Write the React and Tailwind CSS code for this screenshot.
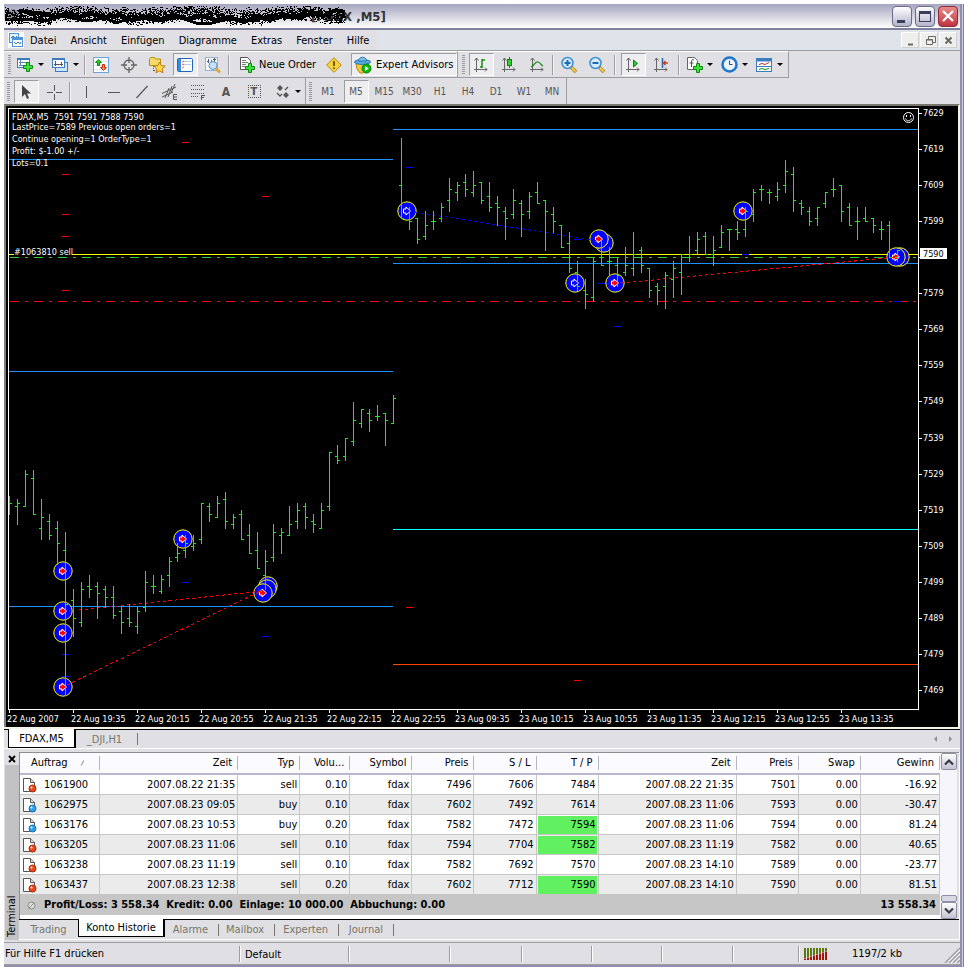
import clsx from 'clsx';

// [high, low, open, close] in chart units, one bar every 8 units
const bars = [
  [496, 515, null, 503], [499, 525, 506, 503], [470, 507, 506, 474], [470, 514, 478, 514],
  [499, 540, 528, 517], [514, 540, 521, 535], [521, 565, 528, 543], [532, 696, 550, 604],
  [589, 637, 600, 618], [582, 627, 622, 589], [575, 598, 586, 589], [582, 619, 586, 593],
  [586, 608, 589, 597], [586, 619, 597, 615], [607, 634, 611, 622], [604, 627, 618, 622],
  [607, 634, 626, 611], [571, 612, 607, 582], [575, 594, 586, 586], [575, 594, 591, 579],
  [557, 587, 575, 561], [543, 562, 557, 553], [535, 558, 550, 543], [535, 551, 546, 543],
  [503, 544, 539, 503], [503, 522, 506, 514], [496, 518, 517, 503], [492, 529, 499, 521],
  [514, 529, 524, 517], [510, 540, 514, 539], [524, 554, 535, 553], [532, 569, 550, 568],
  [550, 590, 575, 561], [524, 562, 557, 532], [528, 554, 535, 532], [506, 536, 535, 524],
  [503, 529, 521, 510], [503, 529, 506, 517], [514, 533, 521, 524], [503, 529, 528, 510],
  [452, 511, 506, 452], [445, 464, 456, 460], [438, 461, 456, 438], [402, 446, 441, 420],
  [409, 428, 423, 409], [409, 432, 413, 420], [405, 421, 416, 416], [413, 446, 413, 420],
  [395, 424, 423, 398], [138, 219, 185, 218], [207, 230, null, 221], [218, 244, 218, 239],
  [211, 240, 236, 225], [211, 230, 221, 221], [203, 222, 218, 207], [178, 212, 200, 189],
  [182, 201, 192, 185], [174, 197, 182, 189], [171, 197, 192, 185], [182, 204, 182, 200],
  [182, 212, 196, 207], [196, 226, 203, 207], [207, 240, 211, 218], [189, 219, 214, 200],
  [200, 237, 203, 214], [192, 219, 211, 196], [182, 204, 192, 203], [200, 251, 200, 211],
  [207, 233, 214, 221], [225, 248, 225, 247], [232, 273, 243, 268], [261, 291, 272, 286],
  [279, 309, 290, 294], [257, 302, 297, 261], [240, 266, 257, 265], [247, 276, 261, 261],
  [257, 287, 265, 275], [247, 276, 272, 265], [232, 276, 268, 254], [247, 273, 250, 265],
  [268, 298, 268, 290], [283, 305, 286, 290], [272, 309, 286, 275], [261, 298, 279, 268],
  [254, 295, 272, 254], [236, 262, 257, 254], [232, 254, 250, 239], [232, 254, 236, 254],
  [236, 266, 254, 250], [225, 248, 247, 232], [229, 251, 229, 229], [221, 240, 229, 232],
  [207, 237, 229, 211], [189, 222, 214, 192], [185, 201, 189, 189], [189, 204, 192, 192],
  [182, 201, 196, 189], [160, 193, 185, 171], [167, 212, 174, 200], [200, 215, 203, 207],
  [207, 226, 211, 221], [207, 226, 218, 207], [192, 208, 203, 192], [178, 197, 189, 189],
  [185, 222, 185, 211], [203, 226, 207, 225], [207, 240, 221, 221], [207, 222, 218, 221],
  [218, 233, 218, 225], [221, 240, 229, 229], [221, 258, 225, 257], [250, 262, 257, 250],
];

// [x1, x2, y, color]
const levels = [
  [9, 393, 159, '#1e90ff'],
  [9, 393, 371, '#1e90ff'],
  [9, 393, 606, '#1e90ff'],
  [393, 918, 129, '#1e90ff'],
  [393, 918, 263, '#1e90ff'],
  [393, 918, 529, '#00ffff'],
  [393, 918, 664, '#ff4500'],
  [9, 918, 254, '#ffff00'],
];

const redStops = [
  [62, 174], [62, 214], [62, 236], [62, 290], [182, 142], [262, 196], [406, 607], [574, 680],
];

const blueStops = [
  [62, 654], [62, 676], [182, 582], [262, 636], [406, 167], [574, 239], [598, 283], [614, 326],
  [742, 254], [894, 301],
];

const markers = [
  [63, 571, 'red'], [63, 611, 'red'], [63, 633, 'red'], [63, 687, 'red'], [183, 539, 'red'],
  [268, 586, 'red'], [267, 589, 'red'], [263, 593, 'red'], [407, 211, 'blue'],
  [575, 283, 'blue'], [615, 283, 'red'], [604, 243, 'blue'], [599, 239, 'red'],
  [743, 211, 'red'], [900, 257, 'red'], [896, 257, 'red'],
];

const trades = [
  [79, 610, 263, 591, '#ff0000'],
  [67, 685, 263, 590, '#ff0000'],
  [621, 283, 897, 257, '#ff0000'],
  [415, 212, 599, 241, '#0000ff'],
];

const times = [
  '22 Aug 2007', '22 Aug 19:35', '22 Aug 20:15', '22 Aug 20:55', '22 Aug 21:35',
  '22 Aug 22:15', '22 Aug 22:55', '23 Aug 09:35', '23 Aug 10:15', '23 Aug 10:55',
  '23 Aug 11:35', '23 Aug 12:15', '23 Aug 12:55', '23 Aug 13:35',
];

const prices = Array.from({ length: 17 }, (_, i) => 7629 - i * 10);

const menus = ['Datei', 'Ansicht', 'Einfügen', 'Diagramme', 'Extras', 'Fenster', 'Hilfe'];

const periods = ['M1', 'M5', 'M15', 'M30', 'H1', 'H4', 'D1', 'W1', 'MN'];

const columns = [
  { label: 'Auftrag', width: 'w-[80px]' },
  { label: 'Zeit', width: 'w-[138px]' },
  { label: 'Typ', width: 'w-[62px]' },
  { label: 'Volu...', width: 'w-[50px]' },
  { label: 'Symbol', width: 'w-[62px]' },
  { label: 'Preis', width: 'w-[62px]' },
  { label: 'S / L', width: 'w-[62px]' },
  { label: 'T / P', width: 'w-[62px]' },
  { label: 'Zeit', width: 'w-[138px]' },
  { label: 'Preis', width: 'w-[62px]' },
  { label: 'Swap', width: 'w-[62px]' },
  { label: 'Gewinn', width: 'w-[79px]' },
];

const orders = [
  ['1061900', '2007.08.22 21:35', 'sell', '0.10', 'fdax', '7496', '7606', '7484', '2007.08.22 21:35', '7501', '0.00', '-16.92'],
  ['1062975', '2007.08.23 09:05', 'buy', '0.10', 'fdax', '7602', '7492', '7614', '2007.08.23 11:06', '7593', '0.00', '-30.47'],
  ['1063176', '2007.08.23 10:53', 'buy', '0.20', 'fdax', '7582', '7472', '7594', '2007.08.23 11:06', '7594', '0.00', '81.24'],
  ['1063205', '2007.08.23 11:06', 'sell', '0.10', 'fdax', '7594', '7704', '7582', '2007.08.23 11:19', '7582', '0.00', '40.65'],
  ['1063238', '2007.08.23 11:19', 'sell', '0.10', 'fdax', '7582', '7692', '7570', '2007.08.23 14:10', '7589', '0.00', '-23.77'],
  ['1063437', '2007.08.23 12:38', 'sell', '0.20', 'fdax', '7602', '7712', '7590', '2007.08.23 14:10', '7590', '0.00', '81.51'],
];

const hitTarget = ['1063176', '1063205', '1063437'];

// Spray of small dots around a wavy centre line, used to black out the title
function sprayPath() {
  let seed = 7;
  const rnd = () => {
    seed = (seed * 16807) % 2147483647;
    return seed / 2147483647;
  };
  let d = '';
  for (let i = 0; i < 3600; i++) {
    const x = Math.floor(1 + rnd() * 340);
    const mid = 11 + Math.sin(x / 17) * 2 + Math.sin(x / 5);
    const y = Math.floor(mid + (rnd() + rnd() - 1) * 9);
    if (y < 2 || y > 22) continue;
    const w = rnd() > 0.8 ? 2 : 1;
    d += `M${x} ${y}h${w}v1h-${w}z`;
  }
  return d;
}

const spray = sprayPath();

function Icon({ children, w = 16, h = 16 }) {
  return (
    <svg width={w} height={h} viewBox={`0 0 ${w} ${h}`} fill="none" className="shrink-0" aria-hidden="true">
      {children}
    </svg>
  );
}

function Plus({ x, y }) {
  return (
    <path
      d={`M${x + 3.5} ${y + 0.5}h3v3h3v3h-3v3h-3v-3h-3v-3h3z`}
      fill="#3fe03f"
      stroke="#0a8a0a"
    />
  );
}

function NewChartIcon() {
  return (
    <Icon w={18} h={18}>
      <rect x="1.5" y="2.5" width="12" height="9" fill="#fff" stroke="#3b7cc0" />
      <path d="M1.5 3h12" stroke="#3b7cc0" strokeWidth="2" />
      <path d="M3 6.5h9M4.5 4v6M3 9.5h5" stroke="#5b86b0" />
      <Plus x={7} y={6} />
    </Icon>
  );
}

function ProfilesIcon() {
  return (
    <Icon w={18} h={18}>
      <rect x="4.5" y="6.5" width="12" height="9" fill="#cfe3f7" stroke="#3b7cc0" />
      <rect x="1.5" y="2.5" width="12" height="9" fill="#fff" stroke="#3b7cc0" />
      <path d="M1.5 3h12" stroke="#3b7cc0" strokeWidth="2" />
      <path d="M3 8.5h9M4.5 5v5M10.5 6v4" stroke="#555" />
    </Icon>
  );
}

function MarketWatchIcon() {
  return (
    <Icon>
      <rect x=".5" y=".5" width="15" height="15" fill="#fff" stroke="#6aa6de" />
      <path d="M1 4.5h14M1 8.5h14M1 12.5h14M8.5 1v14" stroke="#d7e6f5" />
      <path d="M5.5 2.5l3 3h-2v3h-2v-3h-2z" fill="#2fcf2f" stroke="#118811" />
      <path d="M10.5 13.5l-3-3h2v-3h2v3h2z" fill="#ff8a4a" stroke="#c03010" />
    </Icon>
  );
}

function TargetIcon() {
  return (
    <Icon>
      <circle cx="8" cy="8" r="5" stroke="#666" strokeWidth="1.3" />
      <path d="M8 0v6M8 10v6M0 8h6M10 8h6" stroke="#666" strokeWidth="1.3" />
    </Icon>
  );
}

function FavoritesIcon() {
  return (
    <Icon w={18} h={18}>
      <path d="M1.5 9.5v-7l1-1h4l1 1.5h5v6.5z" fill="#f5dc6a" stroke="#b8920a" />
      <path d="M5.5 10v5M6 14.5h3" stroke="#555" strokeDasharray="1 1" />
      <path d="M11.5 6l1.7 3.6 4 .5-3 2.7.8 4-3.5-2-3.5 2 .8-4-3-2.7 4-.5z" fill="#ffd84a" stroke="#c07a10" />
    </Icon>
  );
}

function NavigatorIcon() {
  return (
    <Icon>
      <rect x=".5" y="1.5" width="15" height="13" rx="1" fill="#fff" stroke="#1f66b8" />
      <rect x="1" y="2" width="3" height="12" fill="#3d8be0" />
      <path d="M6 4.5h8M6 7.5h8" stroke="#b8cbe0" />
      <path d="M5.5 4.5h1M5.5 7.5h1M5.5 10.5h1" stroke="#e02020" strokeWidth="1.5" />
    </Icon>
  );
}

function TesterIcon() {
  return (
    <Icon w={18} h={18}>
      <rect x="1.5" y="1.5" width="12" height="13" fill="#f4f8fc" stroke="#9ab4cf" />
      <path d="M4.5 3v4M7.5 4v3M10.5 2v5M3 5.5h2M9 3.5h3" stroke="#4b5b70" />
      <circle cx="9" cy="9.5" r="4" fill="#c6e2f8" stroke="#5a8ebf" />
      <path d="M12 12.5l4 4" stroke="#d8a830" strokeWidth="2.5" />
    </Icon>
  );
}

function NewOrderIcon() {
  return (
    <Icon w={16} h={18}>
      <path d="M1.5 1.5h7l3 3v9h-10z" fill="#fff" stroke="#555" />
      <path d="M3 4.5h4M3 6.5h6M3 8.5h4M3 10.5h3" stroke="#777" />
      <Plus x={6} y={7} />
    </Icon>
  );
}

function WarningIcon() {
  return (
    <Icon>
      <path d="M8 .7L15.3 8 8 15.3.7 8z" fill="#f8d23a" stroke="#b98a08" />
      <path d="M8 4v5M8 10.5v1.5" stroke="#4a3600" strokeWidth="1.5" />
    </Icon>
  );
}

function ExpertIcon() {
  return (
    <Icon w={18} h={18}>
      <path d="M2 8l3-1h7l2 2-1 6-4 2H6l-3-4z" fill="#f3c83c" stroke="#b8860b" />
      <ellipse cx="8.5" cy="6" rx="8" ry="2.5" fill="#5aa8dc" stroke="#2a78b0" />
      <path d="M4.5 5c0-5 8-5 8 0z" fill="#7cc0ec" stroke="#2a78b0" />
      <circle cx="12.5" cy="12.5" r="4.5" fill="#12b812" stroke="#078007" />
      <path d="M11.2 10v5l3.5-2.5z" fill="#fff" />
    </Icon>
  );
}

function Axes() {
  return (
    <path
      d="M3.5 1v14M1 12.5h13M1.5 3.5l2-2.5 2 2.5M12 10.5l2 2-2 2"
      stroke="#666"
    />
  );
}

function BarChartIcon() {
  return (
    <Icon>
      <Axes />
      <path d="M9 2v9M9 3h3M7 10h2" stroke="#149014" strokeWidth="1.5" />
    </Icon>
  );
}

function CandleIcon() {
  return (
    <Icon>
      <Axes />
      <path d="M8.5 0v11" stroke="#0d800d" />
      <rect x="6.5" y="2.5" width="4" height="6" fill="#2fd02f" stroke="#0d800d" />
    </Icon>
  );
}

function LineChartIcon() {
  return (
    <Icon>
      <Axes />
      <path d="M2 10c3-1 4-6 7-5s3 3 5 4" stroke="#149014" strokeWidth="1.3" />
    </Icon>
  );
}

function ZoomIcon({ plus }) {
  return (
    <Icon w={18} h={18}>
      <path d="M11 11l5 5" stroke="#b98a18" strokeWidth="3.5" />
      <path d="M11.5 11.5l4 4" stroke="#ffe070" strokeWidth="1.5" />
      <circle cx="7.5" cy="7" r="5.5" fill="#d4ecfc" stroke="#3f8fd0" strokeWidth="1.5" />
      <path d={plus ? 'M4.5 7h6M7.5 4v6' : 'M4.5 7h6'} stroke="#2468b0" strokeWidth="2" />
    </Icon>
  );
}

function AutoScrollIcon() {
  return (
    <Icon>
      <Axes />
      <path d="M8.5 3v7l4-3.5z" fill="#30d030" stroke="#0d800d" />
    </Icon>
  );
}

function ShiftIcon() {
  return (
    <Icon>
      <Axes />
      <path d="M9.5 1v10" stroke="#2468b0" strokeWidth="1.5" />
      <path d="M15 6h-4M12.5 4l-2 2 2 2" stroke="#d04010" strokeWidth="1.5" />
    </Icon>
  );
}

function IndicatorsIcon() {
  return (
    <Icon w={17} h={18}>
      <path d="M1.5 1.5h7l3 3v9h-10z" fill="#fff" stroke="#666" />
      <path d="M8 4c-2-1-2.5 0-2.5 2v5M3.5 7h4" stroke="#555" />
      <Plus x={7} y={7} />
    </Icon>
  );
}

function ClockIcon() {
  return (
    <Icon w={17} h={17}>
      <circle cx="8.5" cy="8.5" r="7" fill="#eaf4fe" stroke="#1f74cc" strokeWidth="2.5" />
      <path d="M8.5 4.500v4h3" stroke="#445" />
    </Icon>
  );
}

function TemplateIcon() {
  return (
    <Icon w={17} h={16}>
      <rect x=".5" y="1.5" width="15" height="13" fill="#fff" stroke="#3b7cc0" />
      <path d="M1 3h14" stroke="#3b7cc0" strokeWidth="3" />
      <path d="M1 9.5h14" stroke="#3b7cc0" />
      <path d="M3 7.5l3-1 3 1 4-2" stroke="#b03020" />
      <path d="M3 12.5l3-1 3 1 4-1" stroke="#149014" />
    </Icon>
  );
}

function CursorIcon() {
  return (
    <Icon>
      <path d="M4 1v12l3-3 2 5 2-1-2-4.500h4z" fill="#444" />
    </Icon>
  );
}

const lineTools = [
  ['Vertikale Linie', <path key="v" d="M8.5 2v12" stroke="#555" />],
  ['Horizontale Linie', <path key="h" d="M2 8.5h12" stroke="#555" />],
  ['Trendlinie', <path key="t" d="M2.5 14l11-12" stroke="#555" strokeWidth="1.2" />],
  [
    'Kanal',
    <g key="c">
      <path d="M0 9.5L14 3M0 13l11-5M3 14l4-10M6 13l4-11M9 9l4-9" stroke="#555" />
      <path d="M15 10.5h-3.5v5H15M11.5 13H15" stroke="#555" />
    </g>,
  ],
  [
    'Fibonacci',
    <g key="f">
      <path d="M1 1.5h14M1 5.5h14M1 9.5h14M1 12.5h8" stroke="#555" strokeDasharray="1 1" />
      <path d="M15 11.5h-3.5V16M11.5 13.5H14" stroke="#555" />
    </g>,
  ],
];

function ArrowsIcon() {
  return (
    <Icon>
      <path d="M5 1l3 3-3 3-3-3zM11 8l3 3-3 3-3-3z" fill="#555" />
      <path d="M10 6l3-3M2 9l3 3 2-2" stroke="#555" strokeWidth="1.3" />
    </Icon>
  );
}

function ToolButton({ label, pressed, children }) {
  return (
    <button type="button" aria-label={label} className="flex w-7 justify-center text-[#555]">
      <span
        className={clsx(
          'flex h-[23px] w-[25px] items-center justify-center',
          pressed && 'border border-[#9d9da1] border-r-white border-b-white bg-[#eeeef1]'
        )}
      >
        {children}
      </span>
    </button>
  );
}

function SplitButton({ label, width = 'w-[35px]', children }) {
  return (
    <button type="button" aria-label={label} className={clsx('flex items-center gap-1 pl-[3px]', width)}>
      {children}
      <span className="border-x-[3px] border-t-[3px] border-x-transparent border-t-black" />
    </button>
  );
}

function Separator({ margin = 'mx-px' }) {
  return <span className={clsx('h-5 w-[2px] border-l border-[#9d9da1] border-r border-r-[#f4f4f6]', margin)} />;
}

function Grip() {
  return (
    <span className="flex w-2 justify-center">
      <span className="h-5 w-[3px] bg-[repeating-linear-gradient(#9a9a9e_0_1px,#e0dfe3_1px_2px)]" />
    </span>
  );
}

function TitleBar() {
  return (
    <header className="flex h-6 items-center justify-end gap-[3px] bg-linear-to-b from-[#a5a5c0] via-[#d2d2de] to-white pr-[2px]">
      <div className="relative mr-auto h-6 pl-[307px]">
        <h1 className="pt-px text-[13px] leading-6 font-bold text-[#333]">[FDAX ,M5]</h1>
        <svg width="345" height="24" viewBox="0 0 345 24" className="absolute top-0 left-0" shapeRendering="crispEdges" aria-hidden="true">
          <circle cx="9" cy="11" r="6" fill="#8a95a5" />
          <path d="M16 7l24 3 12 3 10-4 14 4 12-3 12 3 16-2 12 5 16-4 14 3 10-4 14 4 16-3 14 4 12-3 16 5 14-6 12 4 16-5 14 3 12-5 12 3 12-6 8 2" fill="none" stroke="#000" strokeWidth="4" />
          <path d="M6 16l20-1 14 2 20-5 22 5 20-3 10 5 6-2 20-3 16 3 20-4 18 6 12 1 20-5 24 2 20-6 18 3 16-6" fill="none" stroke="#000" strokeWidth="3" />
          <path d={spray} fill="#000" />
        </svg>
      </div>
      <button type="button" aria-label="Minimieren" className="flex h-[21px] w-5 items-end rounded-sm border border-[#6b6b8c] bg-linear-to-b from-white to-[#b4b4cc] pb-[3px] pl-1">
        <span className="h-[3px] w-2 bg-[#3c3c5c]" />
      </button>
      <button type="button" aria-label="Maximieren" className="flex h-[21px] w-5 items-center justify-center rounded-sm border border-[#6b6b8c] bg-linear-to-b from-white to-[#b4b4cc]">
        <span className="h-[11px] w-3 border border-t-[3px] border-[#3c3c5c]" />
      </button>
      <button type="button" aria-label="Schließen" className="flex h-[21px] w-5 items-center justify-center rounded-sm border border-[#8c2b3c] bg-linear-to-b from-[#e88a8a] to-[#c03040]">
        <Icon w={14} h={14}>
          <path d="M2 2l10 10M12 2L2 12" stroke="#fff" strokeWidth="2.200" />
        </Icon>
      </button>
    </header>
  );
}

function MenuBar() {
  return (
    <nav className="flex h-[22px] items-center border-t-2 border-[#7f7f9e] bg-[#dfe3ea]">
      <div className="flex h-full items-center gap-[6px] bg-[#e0dfe3] pr-2 pl-1">
        <Icon>
          <rect width="16" height="16" fill="#fff" />
          <rect x="1.5" y="1.5" width="9" height="9" fill="#e4f0fb" stroke="#4f94d8" />
          <path d="M3 6l2-2 2 2 2-2" stroke="#3b7cc0" />
          <rect x="4.5" y="5.5" width="10" height="9" fill="#fff" stroke="#4f94d8" />
          <path d="M5 7h9" stroke="#4f94d8" strokeWidth="2" />
          <path d="M6 10l2 2 2-2 2 2 1-2" stroke="#3b7cc0" />
        </Icon>
        <div className="flex gap-[14px] pt-[2px]">
          {menus.map((item) => (
            <button key={item} type="button">{item}</button>
          ))}
        </div>
      </div>
      <div className="ml-auto flex gap-px pr-[3px]">
        {['M5 11.5h5', 'M6.5 6V3.5h7v6H11M4.5 6.5h6v5h-6zM4 7h7', 'M4.5 4.5l6 6M10.5 4.5l-6 6'].map((d, i) => (
          <button key={d} type="button" aria-label={['Minimieren', 'Wiederherstellen', 'Schließen'][i]} className="border border-white border-r-[#d0d0d0] border-b-[#d0d0d0] bg-[#efefee] px-px">
            <Icon w={14} h={14}>
              <path d={d} stroke="#6a695e" strokeWidth={i === 1 ? 1 : 2} />
            </Icon>
          </button>
        ))}
      </div>
    </nav>
  );
}

function Toolbars() {
  return (
    <div className="border-t border-[#9d9da1]">
      <div className="flex">
        <div className="flex h-[27px] items-center border-r border-b border-[#9d9da1] border-t border-t-white pl-px">
          <Grip />
          <SplitButton label="Neues Chart"><NewChartIcon /></SplitButton>
          <SplitButton label="Profile"><ProfilesIcon /></SplitButton>
          <Separator />
          <ToolButton label="Marktübersicht"><MarketWatchIcon /></ToolButton>
          <ToolButton label="Datenfenster"><TargetIcon /></ToolButton>
          <ToolButton label="Navigator"><FavoritesIcon /></ToolButton>
          <ToolButton label="Terminal" pressed><NavigatorIcon /></ToolButton>
          <ToolButton label="Strategietester"><TesterIcon /></ToolButton>
          <Separator />
          <button type="button" className="flex w-[89px] items-center gap-1 pt-px pl-2 whitespace-nowrap">
            <NewOrderIcon />
            Neue Order
          </button>
          <ToolButton label="MetaEditor"><WarningIcon /></ToolButton>
          <button type="button" className="ml-[3px] flex h-[23px] w-[106px] items-center gap-1 border border-[#9d9da1] border-r-white border-b-white bg-[#eeeef1] pt-px pl-[2px] whitespace-nowrap">
            <ExpertIcon />
            Expert Advisors
          </button>
        </div>
        <div className="flex h-[27px] items-center border-r border-b border-[#9d9da1] border-t border-t-white pl-px">
          <Grip />
          <ToolButton label="Balkenchart" pressed><BarChartIcon /></ToolButton>
          <ToolButton label="Kerzenchart"><CandleIcon /></ToolButton>
          <ToolButton label="Linienchart"><LineChartIcon /></ToolButton>
          <Separator />
          <ToolButton label="Vergrößern"><ZoomIcon plus /></ToolButton>
          <ToolButton label="Verkleinern"><ZoomIcon /></ToolButton>
          <Separator margin="mx-[3px]" />
          <ToolButton label="Automatischer Bildlauf" pressed><AutoScrollIcon /></ToolButton>
          <ToolButton label="Chart verschieben"><ShiftIcon /></ToolButton>
          <Separator margin="mx-[3px]" />
          <SplitButton label="Indikatoren"><IndicatorsIcon /></SplitButton>
          <SplitButton label="Perioden"><ClockIcon /></SplitButton>
          <SplitButton label="Vorlagen"><TemplateIcon /></SplitButton>
        </div>
      </div>
      <div className="flex">
        <div className="flex h-[26px] items-center border-r border-[#9d9da1] pt-px">
          <Grip />
          <ToolButton label="Cursor" pressed><CursorIcon /></ToolButton>
          <ToolButton label="Fadenkreuz">
            <Icon><path d="M8.5 1v6M8.5 10v6M1 8.5h6M10 8.5h6" stroke="#555" /></Icon>
          </ToolButton>
          <Separator />
          {lineTools.map(([label, shape]) => (
            <ToolButton key={label} label={label}><Icon>{shape}</Icon></ToolButton>
          ))}
          <ToolButton label="Text"><span className="text-[12px] font-bold">A</span></ToolButton>
          <ToolButton label="Textmarke">
            <span className="h-[13px] w-[13px] border border-dotted border-[#555] text-center text-[11px] leading-[12px] font-bold">T</span>
          </ToolButton>
          <span className="w-1" />
          <SplitButton label="Pfeile" width="w-[33px]"><ArrowsIcon /></SplitButton>
        </div>
        <div className="flex h-[26px] items-center border-r border-[#9d9da1] pt-px text-[10px]">
          <Grip />
          {periods.map((p) => (
            <ToolButton key={p} label={p} pressed={p === 'M5'}>{p}</ToolButton>
          ))}
        </div>
      </div>
    </div>
  );
}

function Marker({ x, y, color }) {
  return (
    <g transform={`translate(${x} ${y})`} shapeRendering="auto">
      <circle r="9.200" fill="#0000ff" stroke="#ffff00" />
      <path
        d="M-3.500 -2h2.500v-2l4.500 4-4.500 4v-2h-2.500z"
        fill={color === 'red' ? '#ff0000' : '#0000ff'}
        stroke="#fff"
      />
    </g>
  );
}

function Chart() {
  return (
    <svg viewBox="6 106 952 621" className="block h-auto w-full bg-black text-[9px]" shapeRendering="crispEdges" role="img" aria-label="FDAX,M5">
      <path d="M8.5 709.5V108.5H918.5V709.5z" fill="none" stroke="#fff" />
      {levels.map(([x1, x2, y, color]) => (
        <path key={`${x1}-${y}`} d={`M${x1} ${y}.5H${x2}`} stroke={color} />
      ))}
      <path d="M10 257.5H918" stroke="#32cd32" strokeDasharray="9 6 3 6" />
      <path d="M10 301.5H918" stroke="#ff0000" strokeDasharray="9 6 3 6" />
      {redStops.map(([x, y]) => (
        <path key={`${x}-${y}`} d={`M${x} ${y}.5h7`} stroke="#ff0000" />
      ))}
      {blueStops.map(([x, y]) => (
        <path key={`${x}-${y}`} d={`M${x} ${y}.5h7`} stroke="#0000ff" />
      ))}
      {markers.map(([x, y, color]) => (
        <Marker key={`${x}-${y}`} x={x} y={y} color={color} />
      ))}
      {trades.map(([x1, y1, x2, y2, color]) => (
        <path key={`${x1}-${y1}`} d={`M${x1} ${y1}L${x2} ${y2}`} stroke={color} strokeDasharray="3 3" />
      ))}
      {bars.map(([high, low, open, close], i) => {
        const x = 9 + i * 8;
        return (
          <path
            key={x}
            d={`M${x}.5 ${high}V${low}M${x} ${close}.5h3${open ? `M${x - 2} ${open}.5h3` : ''}`}
            stroke="#00ff00"
          />
        );
      })}

      <g fill="#fff">
        <text x="12" y="120" xmlSpace="preserve">FDAX,M5  7591 7591 7588 7590</text>
        <text x="12" y="130">LastPrice=7589 Previous open orders=1</text>
        <text x="12" y="142">Continue opening=1 OrderType=1</text>
        <text x="12" y="154">Profit: $-1.00 +/-</text>
        <text x="12" y="166">Lots=0.1</text>
        <rect x="14" y="247" width="58" height="9" fill="#000" />
        <text x="14" y="255">#1063810 sell</text>
        {prices.map((price, i) => {
          const y = 113 + Math.round(i * 36.06);
          return (
            <g key={price}>
              <path d={`M918 ${y}.5h4`} stroke="#fff" />
              {price !== 7589 && <text x="923" y={y + 3}>{price}</text>}
            </g>
          );
        })}
        {times.map((time, i) => (
          <g key={time}>
            <path d={`M${9 + i * 64}.5 710v3`} stroke="#fff" />
            <text x={7 + i * 64} y="722">{time}</text>
          </g>
        ))}
        <rect x="920" y="248" width="27" height="11" />
      </g>
      <text x="923" y="257" fill="#000">7590</text>
      <g fill="none" stroke="#fff" shapeRendering="auto">
        <circle cx="908.5" cy="117.5" r="5" />
        <path d="M906.5 115v2M910.5 115v2M905.5 118.5c1 3 5 3 6 0" />
      </g>
    </svg>
  );
}

function ChartTabs() {
  return (
    <div className="flex h-[22px] items-start border-t-2 border-b border-t-[#f5f4e6] border-b-white bg-[#e0dfe3]">
      <div className="flex h-[19px] flex-1 border-t border-black pl-1 leading-[17px]">
        <button type="button" className="-mt-px h-[19px] w-[68px] border border-t-0 border-r-2 border-black bg-white">FDAX,M5</button>
        <button type="button" className="w-[53px] pl-1 text-[#77766a]">_DJI,H1</button>
        <span className="ml-2 mt-[3px] h-3 w-px bg-[#77766a]" />
        <div className="ml-auto flex items-center gap-3 pr-2">
          <span className="border-y-[3px] border-r-[3px] border-y-transparent border-r-[#8d8d92]" />
          <span className="border-y-[3px] border-l-[3px] border-y-transparent border-l-[#8d8d92]" />
        </div>
      </div>
    </div>
  );
}

function OrderIcon({ type }) {
  return (
    <Icon>
      <path d="M1.5 1.5h7l4 4v9h-11z" fill="#fff" stroke="#555" />
      <path d="M8.5 1.5v4h4" fill="#ddd" stroke="#555" />
      <circle cx="10.5" cy="11.5" r="3.5" fill={type === 'sell' ? '#e8481c' : '#2f9fe8'} stroke={type === 'sell' ? '#a82c08' : '#1870b0'} />
      <circle cx="9.5" cy="10.5" r="1" fill="#fff" />
    </Icon>
  );
}

function OrderTable() {
  return (
    <table className="w-full table-fixed border-separate border-spacing-0 text-right leading-4">
      <thead>
        <tr>
          {columns.map(({ label, width }, i) => (
            <th key={i} scope="col" className={clsx('h-[22px] border-b-2 border-[#b9b9cb] bg-[#fafaff] p-0 font-normal', width)}>
              <span className={clsx('flex h-[14px] items-center border-r border-[#b5b5bd] pr-[5px] leading-[14px]', i === 0 ? 'gap-3 pl-[11px]' : 'justify-end')}>
                {label}
                {i === 0 && (
                  <Icon w={8} h={8}>
                    <path d="M1 7L4 1" stroke="#8d8d92" />
                    <path d="M4 1l3 6H1" stroke="#fff" />
                  </Icon>
                )}
              </span>
            </th>
          ))}
        </tr>
      </thead>
      <tbody>
        {orders.map((order) => (
          <tr key={order[0]} className="odd:bg-white even:bg-[#ebebeb]">
            {order.map((value, i) => (
              <td key={i} className="h-5 border-r border-b border-[#c6c6c6] p-0">
                {i === 0 ? (
                  <span className="flex items-center gap-[6px] pl-[2px]">
                    <OrderIcon type={order[2]} />
                    {value}
                  </span>
                ) : (
                  <span className={clsx('block', i === 7 && hitTarget.includes(order[0]) ? 'mx-px bg-[#60f060] py-px pr-px' : 'pr-[2px]')}>{value}</span>
                )}
              </td>
            ))}
          </tr>
        ))}
      </tbody>
      <tfoot>
        <tr className="bg-[#c6c6c6] font-bold">
          <td colSpan={10} className="h-5 p-0 text-left">
            <span className="flex items-center gap-2 pl-[7px] whitespace-pre">
              <Icon w={9} h={9}>
                <circle cx="4.5" cy="4.5" r="3.5" fill="#ddd" stroke="#8a8a8a" />
                <path d="M2 7l5-5" stroke="#8a8a8a" />
              </Icon>
              {'Profit/Loss: 3 558.34  Kredit: 0.00  Einlage: 10 000.00  Abbuchung: 0.00'}
            </span>
          </td>
          <td colSpan={2} className="p-0 pr-1">13 558.34</td>
        </tr>
      </tfoot>
    </table>
  );
}

function ScrollButton({ label, d }) {
  return (
    <button type="button" aria-label={label} className="flex h-[17px] w-4 items-center justify-center rounded-xs border border-[#8f8fa5] bg-linear-to-b from-white to-[#c3c3d3]">
      <Icon w={10} h={8}>
        <path d={d} stroke="#3a3a44" strokeWidth="2.200" />
      </Icon>
    </button>
  );
}

function Terminal() {
  return (
    <section className="flex pt-[3px]">
      <div className="flex w-[15px] flex-col items-center pl-px">
        <button type="button" aria-label="Schließen" className="flex h-[13px] items-center">
          <Icon w={8} h={8}>
            <path d="M1 1l6 6M7 1L1 7" stroke="#000" strokeWidth="1.800" />
          </Icon>
        </button>
        <span className="w-full flex-1 rotate-180 bg-[#c2c2c4] pt-[3px] leading-[14px] [writing-mode:vertical-rl]">Terminal</span>
      </div>
      <div className="min-w-0 flex-1 border-r border-b border-white">
        <div className="flex border-t border-l border-[#8f8f93] bg-white">
          <div className="min-w-0 flex-1 pb-1">
            <OrderTable />
          </div>
          <div className="flex w-[17px] flex-col bg-[#f5f5fa] pl-px">
            <ScrollButton label="Nach oben" d="M1 6.5l4-4 4 4" />
            <span className="mt-auto h-[7px] w-4 rounded-xs border border-[#8f8fa5] bg-[#d9d9e6]" />
            <ScrollButton label="Nach unten" d="M1 1.5l4 4 4-4" />
          </div>
          <span className="w-[2px] bg-[#e0dfe3]" />
        </div>
        <div className="flex h-5 border-t border-black leading-[18px] text-[#77766a]">
          <button type="button" className="w-[59px]">Trading</button>
          <button type="button" className="-mt-px h-[18px] w-[87px] border border-t-0 border-r-2 border-black bg-white text-black">Konto Historie</button>
          {[['Alarme', 'w-[54px]'], ['Mailbox', 'w-[56px]'], ['Experten', 'w-[64px]'], ['Journal', 'w-[55px]']].map(([tab, width]) => (
            <button key={tab} type="button" className={clsx('flex items-center justify-end gap-[10px]', width)}>
              {tab}
              <span className="h-3 w-px bg-[#77766a]" />
            </button>
          ))}
        </div>
      </div>
    </section>
  );
}

function StatusBar() {
  const cells = ['w-[109px]', 'w-[101px]', 'w-[72px]', 'w-[70px]', 'w-[70px]', 'w-[71px]', 'w-[66px]'];
  return (
    <footer className="mt-[2px] flex h-[23px] items-center border-t border-b border-t-[#9d9da1] border-b-[#9d9da1] leading-4">
      <span className="min-w-0 flex-1 pt-px pl-px">Für Hilfe F1 drücken</span>
      {cells.map((width, i) => (
        <span key={i} className={clsx('h-4 border-l border-[#9d9da1] pt-px pl-[5px] shadow-[inset_1px_0_#fff]', width)}>
          {i === 0 && 'Default'}
        </span>
      ))}
      <div className="flex h-4 w-[146px] items-center gap-6 border-l border-[#9d9da1] pt-px pl-[5px] shadow-[inset_1px_0_#fff]">
        <Icon w={24} h={12}>
          {[0, 1, 2, 3, 4, 5, 6, 7].map((n) => (
            <g key={n}>
              <path d={`M${n * 3 + 1} 0V${10 - n}`} stroke="#5a7a10" strokeWidth="2" />
              <path d={`M${n * 3 + 1} ${10.5 - n}V12`} stroke="#a01808" strokeWidth="2" />
            </g>
          ))}
        </Icon>
        1197/2 kb
      </div>
      <Icon w={16} h={18}>
        <path d="M1 18L16 3M5 18L16 7M9 18l7-7M13 18l3-3" stroke="#9d9da1" strokeWidth="1.5" />
        <path d="M3 18L16 5M7 18l9-9M11 18l5-5" stroke="#fff" />
      </Icon>
    </footer>
  );
}

export default function App() {
  return (
    <div className="bg-white pt-1 pl-1 font-['DejaVu_Sans_Condensed','DejaVu_Sans',sans-serif] text-[11px] text-black">
      <div className="border-r border-[#7c7c9c] bg-[#d0d0e0] pr-px">
        <div className="border-r-2 border-b-2 border-[#8f8fb0] bg-[#e0dfe3]">
          <TitleBar />
          <MenuBar />
          <Toolbars />
          <main className="border-t-2 border-r-2 border-l-2 border-[#77766a] border-r-[#f5f4e6] border-l-[#808084]">
            <Chart />
          </main>
          <ChartTabs />
          <Terminal />
          <StatusBar />
        </div>
      </div>
    </div>
  );
}
